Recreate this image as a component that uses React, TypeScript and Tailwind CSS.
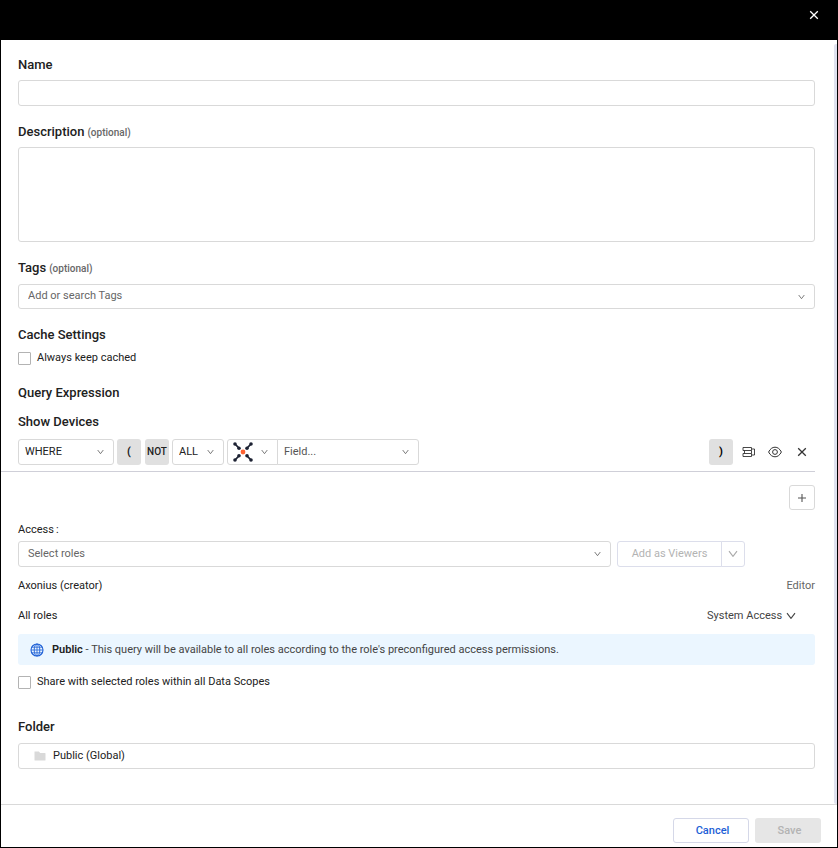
import React from "react";
import clsx from "clsx";

const Chevron: React.FC<{ className?: string }> = ({ className }) => (
  <svg viewBox="0 0 10 8" fill="none" stroke="currentColor" className={clsx("pointer-events-none", className)} aria-hidden="true">
    <path d="M1 1.2 L5 6.4 L9 1.2" strokeWidth="1.1" strokeLinejoin="round" />
  </svg>
);

const Cross: React.FC<{ className?: string }> = ({ className }) => (
  <svg viewBox="0 0 10 10" fill="none" stroke="currentColor" className={className} aria-hidden="true">
    <path d="M1.2 1.2 L8.8 8.8 M8.8 1.2 L1.2 8.8" strokeWidth="1.3" />
  </svg>
);

const AxoniusLogo: React.FC = () => (
  <svg viewBox="0 0 20 20" className="w-5 h-5" fill="#1d2233" stroke="#1d2233" aria-hidden="true">
    <path d="M2 2 L6 6.2 M18 2 L14 6.2 M2 18 L6 13.8 M18 18 L14 13.8" strokeWidth="1.7" />
    <g stroke="none">
      <circle cx="2" cy="2" r="1.8" />
      <circle cx="18" cy="2" r="1.8" />
      <circle cx="2" cy="18" r="1.8" />
      <circle cx="18" cy="18" r="1.8" />
      <circle cx="6" cy="6.2" r="1.8" />
      <circle cx="14" cy="6.2" r="1.8" />
      <circle cx="6" cy="13.8" r="1.8" />
      <circle cx="14" cy="13.8" r="1.8" />
    </g>
    <circle cx="10" cy="10" r="2.4" fill="#ff6232" stroke="none" />
  </svg>
);

const GlobeIcon: React.FC = () => (
  <svg viewBox="0 0 14 14" className="w-[14px] h-[14px] shrink-0" fill="none" stroke="#1d5fd6" aria-hidden="true">
    <circle cx="7" cy="7" r="6" strokeWidth="1.1" />
    <ellipse cx="7" cy="7" rx="2.8" ry="6" strokeWidth="0.9" />
    <path d="M7 1 V13 M1 7 H13 M1.8 4.2 H12.2 M1.8 9.8 H12.2" strokeWidth="0.8" />
  </svg>
);

const RowsIcon: React.FC = () => (
  <svg viewBox="0 0 14 12" className="w-[14px] h-3" fill="none" stroke="currentColor" aria-hidden="true">
    <path d="M1 1.5 H9.5 V4.5 H1 Z M1 7.5 H9.5 V10.5 H1 Z M2.5 4.5 V7.5 M9.5 4.5 V7.5" strokeWidth="0.9" />
    <path d="M10 3 H12.5 V9 H10" strokeWidth="0.9" />
  </svg>
);

const EyeIcon: React.FC = () => (
  <svg viewBox="0 0 14 12" className="w-[14px] h-3" fill="none" stroke="currentColor" aria-hidden="true">
    <path d="M0.6 6 C2.2 2.8 4.4 1.2 7 1.2 S11.8 2.8 13.4 6 C11.8 9.2 9.6 10.8 7 10.8 S2.2 9.2 0.6 6 Z" />
    <circle cx="7" cy="6" r="2.4" />
  </svg>
);

const FolderIcon: React.FC = () => (
  <svg viewBox="0 0 12 10" className="w-3 h-[10px]" fill="#d9d9d9" aria-hidden="true">
    <path d="M0.5 0.5 H4.8 L6.2 2 H11 Q11.5 2 11.5 2.5 V9 Q11.5 9.5 11 9.5 H1 Q0.5 9.5 0.5 9 Z" />
  </svg>
);

interface SelectProps {
  id?: string;
  label?: string;
  text: string;
  className?: string;
  selectClass?: string;
}

const Select: React.FC<SelectProps> = ({ id, label, text, className, selectClass }) => (
  <div className={clsx("relative", className)}>
    <select
      id={id}
      aria-label={label}
      className={clsx("w-full h-full appearance-none border border-[#d9d9d9] bg-white pb-px outline-none", selectClass)}
    >
      <option>{text}</option>
    </select>
    <Chevron className="absolute right-[10px] top-1/2 -mt-[3px] w-[7px] h-[6px] text-[#555]" />
  </div>
);

const Optional = () => <span className="ml-[3px] text-[10px] leading-3 font-medium text-[#666]">(optional)</span>;

const heading = "block text-[13px] leading-4 font-medium text-[#212121]";
const box = "block w-full rounded-[3px] border border-[#d9d9d9] bg-white outline-none";
const checkbox = "w-[13px] h-[13px] appearance-none rounded-[1px] border border-[#b3b3b3] bg-white";
const bracket = "h-[26px] w-6 rounded-[3px] bg-[#e0e0e0]";

export default function App() {
  return (
    <div className="min-h-screen flex flex-col bg-white border-x border-b border-black font-['Roboto',sans-serif] text-[11px] leading-4 text-[#212121]">
      <header className="h-10 shrink-0 flex items-start justify-end bg-black pt-[10px] pr-[18px]">
        <button aria-label="Close" className="text-white">
          <Cross className="w-[10px] h-[10px]" />
        </button>
      </header>

      <div className="flex-1 flex">
        <main className="flex-1 min-w-0 pl-[17px] pr-[19px] pt-[17px] pb-[35px]">
          <label htmlFor="name" className={heading}>Name</label>
          <input id="name" type="text" className={clsx(box, "mt-[7px] h-[26px] px-2")} />

          <label htmlFor="description" className={clsx(heading, "mt-[18px]")}>
            Description<Optional />
          </label>
          <textarea id="description" className={clsx(box, "mt-[7px] h-[95px] resize-none p-2")} />

          <label htmlFor="tags" className={clsx(heading, "mt-[18px]")}>
            Tags<Optional />
          </label>
          <Select id="tags" text="Add or search Tags" className="mt-2 h-[25px]" selectClass="rounded-[3px] pl-[9px] text-[#666]" />

          <h2 className={clsx(heading, "mt-[18px]")}>Cache Settings</h2>
          <label className="mt-[7px] flex items-center gap-[6px]">
            <input type="checkbox" className={checkbox} />
            Always keep cached
          </label>

          <h2 className={clsx(heading, "mt-[19px]")}>Query Expression</h2>
          <h3 className={clsx(heading, "mt-[13px]")}>Show Devices</h3>

          {/* Expression row */}
          <div className="-ml-[17px] pl-[17px] mt-[9px] pb-[6px] flex items-center border-b border-[#cfcfd8]">
            <Select label="Condition" text="WHERE" className="w-24 h-[26px]" selectClass="rounded-[3px] pl-[6px]" />
            <button className={clsx(bracket, "ml-[3px] font-bold")}>(</button>
            <button className={clsx(bracket, "ml-1 text-[10px] font-medium")}>NOT</button>
            <Select label="Scope" text="ALL" className="ml-[3px] w-[52px] h-[26px]" selectClass="rounded-[3px] pl-[6px]" />
            <button
              aria-label="Adapter"
              className="ml-[3px] w-[51px] h-[26px] flex items-center gap-2 rounded-l-[3px] border border-[#d9d9d9] pl-[5px]"
            >
              <AxoniusLogo />
              <Chevron className="w-[7px] h-[6px] text-[#555]" />
            </button>
            <Select label="Field" text="Field..." className="-ml-px w-[142px] h-[26px]" selectClass="rounded-r-[3px] pl-[6px] text-[#555]" />
            <div className="ml-auto flex items-center text-[#333]">
              <button className={clsx(bracket, "font-bold text-black")}>)</button>
              <button aria-label="Group rows" className="ml-[9px]"><RowsIcon /></button>
              <button aria-label="Preview" className="ml-3"><EyeIcon /></button>
              <button aria-label="Remove" className="ml-[15px] mr-2"><Cross className="w-[10px] h-[10px]" /></button>
            </div>
          </div>

          <div className="mt-[13px] flex justify-end">
            <button aria-label="Add expression" className="w-[26px] h-[25px] flex items-center justify-center rounded-[3px] border border-[#d9d9d9] text-[#555]">
              <svg viewBox="0 0 8 8" className="w-2 h-2" stroke="currentColor" aria-hidden="true">
                <path d="M4 0 V8 M0 4 H8" strokeWidth="1.1" />
              </svg>
            </button>
          </div>

          {/* Access */}
          <label htmlFor="access" className="mt-3 block">
            Access<span className="ml-[2px]">:</span>
          </label>
          <div className="mt-[3px] flex">
            <Select id="access" text="Select roles" className="flex-1 h-[26px]" selectClass="rounded-[3px] pl-[9px] text-[#666]" />
            <button disabled className="ml-[6px] w-[105px] h-[26px] rounded-l-[3px] border border-[#dcdeeb] text-[#b3b3b3] pb-px">
              Add as Viewers
            </button>
            <button
              disabled
              aria-label="More options"
              className="-ml-px mr-[70px] w-6 h-[26px] flex items-center justify-center rounded-r-[3px] border border-[#dcdeeb] text-[#aaa]"
            >
              <Chevron className="w-[10px] h-2" />
            </button>
          </div>

          <div className="mt-[11px] flex justify-between">
            <span>Axonius (creator)</span>
            <span className="text-[#666]">Editor</span>
          </div>
          <div className="mt-[14px] flex justify-between">
            <label htmlFor="all-roles">All roles</label>
            <div className="relative mr-[19px] text-[#444]">
              <select id="all-roles" className="block h-4 appearance-none bg-white pr-[13px] outline-none">
                <option>System Access</option>
              </select>
              <Chevron className="absolute right-0 top-1 w-[10px] h-2" />
            </div>
          </div>

          <div className="mt-[10px] min-h-[31px] flex items-center gap-2 rounded-[3px] bg-[#ebf6ff] pl-3">
            <GlobeIcon />
            <p className="text-[#444]">
              <strong className="font-semibold text-[#212121]">Public</strong> - This query will be available to all roles according to the role's preconfigured access permissions.
            </p>
          </div>

          <label className="mt-[9px] flex items-center gap-[6px]">
            <input type="checkbox" className={checkbox} />
            Share with selected roles within all Data Scopes
          </label>

          <h2 className={clsx(heading, "mt-[29px]")}>Folder</h2>
          <button className={clsx(box, "mt-2 h-[26px] flex items-center gap-[7px] pl-[15px] pb-px")}>
            <FolderIcon />
            Public (Global)
          </button>
        </main>
        {/* Scroll track */}
        <div className="w-[3px] mt-1 rounded-l-[2px] bg-[#dfe2ef]" />
      </div>

      <footer className="shrink-0 flex justify-end gap-[6px] border-t border-[#d9d9d9] pt-[13px] pr-4 pb-1 font-medium">
        <button className="w-[76px] h-[25px] rounded-[3px] border border-[#d5d8e8] pl-[3px] text-[#1d5fd6]">Cancel</button>
        <button disabled className="w-[66px] h-[25px] rounded-[3px] bg-[#e6e6e6] pl-[3px] text-[#b3b3b3]">Save</button>
      </footer>
    </div>
  );
}
